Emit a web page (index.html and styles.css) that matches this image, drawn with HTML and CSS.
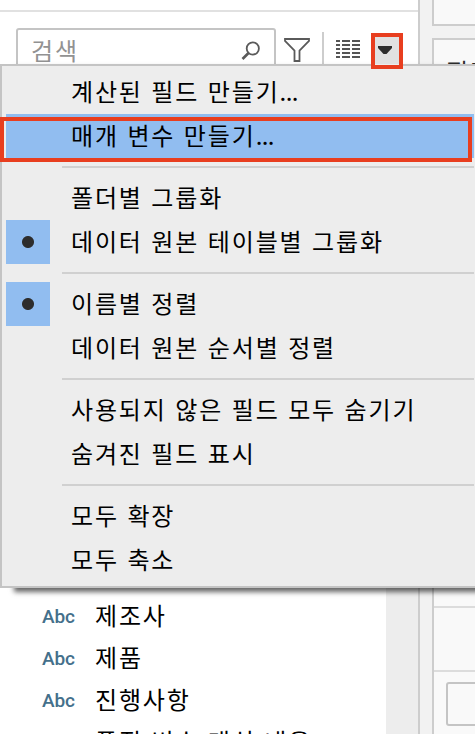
FILE: index.html
```html
<!DOCTYPE html>
<html lang="ko">
<head>
    <meta charset="UTF-8">
    <meta name="viewport" content="width=device-width, initial-scale=1.0">
    <title>데이터 패널</title>
    <link rel="stylesheet" href="styles.css">
</head>
<body>
    <div class="app">
        <div class="data-pane">
            <div class="pane-top"></div>
            <div class="toolbar">
                <div class="search">
                    <span>검색</span>
                    <svg class="icon-search" width="20" height="20" viewBox="0 0 20 20" fill="none" stroke="#5a5a5a">
                        <circle cx="12.8" cy="7.5" r="6.1" stroke-width="1.8"/>
                        <path d="M8.5 12L2.5 18" stroke-width="2.6"/>
                    </svg>
                </div>
                <svg class="icon-filter" width="26" height="26" viewBox="0 0 26 26" fill="none" stroke="#5a5a5a" stroke-width="1.8">
                    <path d="M1 2H25V4L15.5 13.5V24H10.5V13.5L1 4Z"/>
                </svg>
                <div class="divider"></div>
                <svg class="icon-list" width="24" height="18" viewBox="0 0 24 18" stroke="#555" stroke-width="2">
                    <path d="M0 1H4M6 1H14M16 1H24M0 5H4M6 5H14M16 5H24M0 9H4M6 9H14M16 9H24M0 13H4M6 13H14M16 13H24M0 17H4M6 17H14M16 17H24"/>
                </svg>
            </div>
            <ul class="fields">
                <li><span class="type">Abc</span>제조사</li>
                <li><span class="type">Abc</span>제품</li>
                <li><span class="type">Abc</span>진행사항</li>
                <li><span class="type"></span>품질 변수 매쉬 내용</li>
            </ul>
            <div class="scrollbar"></div>
        </div>
        <div class="shelves">
            <div class="card pages"></div>
            <div class="card filters">필터</div>
            <div class="card marks">
                <div class="mark-row"></div>
                <div class="mark-box"></div>
            </div>
        </div>
    </div>

    <ul class="menu">
        <li>계산된 필드 만들기<span class="dots">...</span></li>
        <li class="active">매개 변수 만들기<span class="dots">...</span></li>
        <li class="separator"></li>
        <li>폴더별 그룹화</li>
        <li class="checked">데이터 원본 테이블별 그룹화</li>
        <li class="separator"></li>
        <li class="checked">이름별 정렬</li>
        <li>데이터 원본 순서별 정렬</li>
        <li class="separator"></li>
        <li>사용되지 않은 필드 모두 숨기기</li>
        <li>숨겨진 필드 표시</li>
        <li class="separator"></li>
        <li>모두 확장</li>
        <li>모두 축소</li>
    </ul>

    <div class="mark-item"></div>
    <div class="mark-button">
        <svg width="14" height="8" viewBox="0 0 14 8"><path d="M0 0H14V2L8.5 8H5.5L0 2Z" fill="#2d2d2d"/></svg>
    </div>
</body>
</html>
```
FILE: styles.css
```css
* {
    box-sizing: border-box;
}
body {
    margin: 0;
    height: 734px;
    overflow: hidden;
    position: relative;
    font-family: "Noto Sans CJK KR", sans-serif;
    font-size: 24px;
    letter-spacing: 1.85px;
    color: #000;
    background: #fff;
}
ul {
    list-style: none;
    margin: 0;
    padding: 0;
}
.app {
    display: flex;
    height: 734px;
}
.data-pane {
    position: relative;
    width: 420px;
    flex: none;
    border-right: 2px solid #cdcdcd;
}
.pane-top {
    height: 12px;
    border-bottom: 2px solid #e1e1e1;
}
.toolbar {
    display: flex;
    align-items: flex-start;
    height: 84px;
    padding: 16px 0 0 16px;
}
.search {
    display: flex;
    justify-content: space-between;
    width: 260px;
    height: 44px;
    padding: 0 14px 0 13px;
    border: 2px solid #c4c4c4;
    border-radius: 3px;
    line-height: 40px;
    color: #929292;
}
.icon-search {
    margin-top: 11px;
}
.icon-filter {
    margin: 9px 0 0 8px;
}
.divider {
    width: 2px;
    height: 34px;
    margin: 4px 12px 0;
    background: #cdcdcd;
}
.icon-list {
    margin-top: 12px;
}
.fields {
    padding-top: 499px;
}
.fields li {
    display: flex;
    height: 42px;
    line-height: 40px;
    padding-left: 42px;
    white-space: nowrap;
}
.type {
    width: 53px;
    padding-top: 2px;
    font-family: Roboto, sans-serif;
    font-size: 19px;
    font-weight: 500;
    letter-spacing: -0.2px;
    color: #44708b;
}
/* 목록 오른쪽 스크롤바 */
.scrollbar {
    position: absolute;
    right: 0;
    top: 588px;
    bottom: 0;
    width: 32px;
    background: #ededed;
}
.shelves {
    display: flex;
    flex-direction: column;
    flex: 1;
    padding-left: 12px;
    background: #f2f2f2;
    overflow: hidden;
}
.card {
    border-left: 2px solid #cdcdcd;
    background: #f9f9f9;
}
.pages {
    height: 26px;
    margin-bottom: 12px;
    border-bottom: 2px solid #cdcdcd;
}
.filters {
    height: 550px;
    padding: 13px 0 0 12px;
    border-top: 2px solid #cdcdcd;
    line-height: 36px;
    white-space: nowrap;
    color: #2d2d2d;
}
.marks {
    flex: 1;
    padding-top: 18px;
}
.mark-row {
    height: 66px;
    border-top: 2px solid #dcdcdc;
    border-bottom: 2px solid #dcdcdc;
}
.mark-box {
    width: 60px;
    height: 44px;
    margin: 10px 0 0 12px;
    border: 2px solid #c4c4c4;
    border-radius: 3px;
}
.menu {
    position: absolute;
    left: 0;
    top: 64px;
    width: 490px;
    height: 524px;
    padding: 4px 14px 4px 4px;
    border: 2px solid #c4c4c4;
    background: #ededed;
    box-shadow: 14px 4px 5px rgba(0, 0, 0, 0.6);
}
.menu li {
    height: 44px;
    line-height: 42px;
    padding-left: 65px;
    white-space: nowrap;
}
.dots {
    letter-spacing: -0.6px;
}
.menu .active {
    background: #91bdf0;
}
.menu .separator {
    height: 18px;
    margin-left: 56px;
    padding: 8px 0;
    background: #d0d0d0 content-box;
}
.menu .checked {
    background: radial-gradient(circle at 22px 22px, #2d2d2d 5.5px, transparent 6.5px), linear-gradient(#91bdf0, #91bdf0) 0 0 / 44px 44px no-repeat;
}
/* 강조 테두리 */
.mark-item {
    position: absolute;
    left: 0;
    top: 117px;
    width: 472px;
    height: 45px;
    border: 4px solid #e83e1f;
}
.mark-button {
    position: absolute;
    left: 371px;
    top: 33px;
    width: 32px;
    height: 36px;
    padding: 9px 0 0 3px;
    border: 4px solid #e83e1f;
    background: linear-gradient(#e1e1e1 27px, #ededed 27px);
}
.mark-button svg {
    display: block;
}
```
